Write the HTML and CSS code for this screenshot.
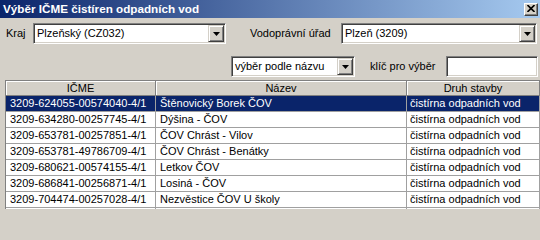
FILE: index.html
```html
<!DOCTYPE html>
<html lang="cs">
<head>
<meta charset="utf-8">
<title>Výběr IČME čistíren odpadních vod</title>
<link rel="stylesheet" href="styles.css">
</head>
<body>
<div class="window">
  <div class="titlebar">
    <span class="title">Výběr IČME čistíren odpadních vod</span>
    <span class="close"><svg width="8" height="7" viewBox="0 0 8 7"><path d="M0.5 0 L7.5 7 M7.5 0 L0.5 7" stroke="#000" stroke-width="1.6" fill="none"/></svg></span>
  </div>
  <div class="row1">
    <span class="lbl lbl-kraj">Kraj</span>
    <div class="combo combo-kraj">
      <span class="combo-text">Plzeňský (CZ032)</span>
      <span class="combo-btn"><svg width="7" height="4" viewBox="0 0 7 4"><polygon points="0,0 7,0 3.5,4" fill="#000"/></svg></span>
    </div>
    <span class="lbl lbl-urad">Vodoprávní úřad</span>
    <div class="combo combo-urad">
      <span class="combo-text">Plzeň (3209)</span>
      <span class="combo-btn"><svg width="7" height="4" viewBox="0 0 7 4"><polygon points="0,0 7,0 3.5,4" fill="#000"/></svg></span>
    </div>
  </div>
  <div class="row2">
    <div class="combo combo-mode">
      <span class="combo-text">výběr podle názvu</span>
      <span class="combo-btn"><svg width="7" height="4" viewBox="0 0 7 4"><polygon points="0,0 7,0 3.5,4" fill="#000"/></svg></span>
    </div>
    <span class="lbl lbl-key">klíč pro výběr</span>
    <div class="textbox"></div>
  </div>
  <div class="grid">
    <div class="grid-row head">
      <div class="cell">IČME</div>
      <div class="cell">Název</div>
      <div class="cell">Druh stavby</div>
    </div>
    <div class="grid-row selected">
      <div class="cell">3209-624055-00574040-4/1</div>
      <div class="cell">Štěnovický Borek ČOV</div>
      <div class="cell c3">čistírna odpadních vod</div>
    </div>
    <div class="grid-row">
      <div class="cell">3209-634280-00257745-4/1</div>
      <div class="cell">Dýšina - ČOV</div>
      <div class="cell c3">čistírna odpadních vod</div>
    </div>
    <div class="grid-row">
      <div class="cell">3209-653781-00257851-4/1</div>
      <div class="cell">ČOV Chrást - Vilov</div>
      <div class="cell c3">čistírna odpadních vod</div>
    </div>
    <div class="grid-row">
      <div class="cell">3209-653781-49786709-4/1</div>
      <div class="cell">ČOV Chrást - Benátky</div>
      <div class="cell c3">čistírna odpadních vod</div>
    </div>
    <div class="grid-row">
      <div class="cell">3209-680621-00574155-4/1</div>
      <div class="cell">Letkov ČOV</div>
      <div class="cell c3">čistírna odpadních vod</div>
    </div>
    <div class="grid-row">
      <div class="cell">3209-686841-00256871-4/1</div>
      <div class="cell">Losiná - ČOV</div>
      <div class="cell c3">čistírna odpadních vod</div>
    </div>
    <div class="grid-row">
      <div class="cell">3209-704474-00257028-4/1</div>
      <div class="cell">Nezvěstice ČOV U školy</div>
      <div class="cell c3">čistírna odpadních vod</div>
    </div>
    <div class="grid-row">
      <div class="cell"></div>
      <div class="cell"></div>
      <div class="cell c3"></div>
    </div>
  </div>
</div>
</body>
</html>
```

FILE: styles.css
```css
html, body {
  margin: 0;
  padding: 0;
  background: #d4d0c8;
}

.window {
  width: 540px;
  height: 209px;
  overflow: hidden;
  background: #d4d0c8;
  font-family: "Liberation Sans", Arial, sans-serif;
  font-size: 11px;
  color: #000;
}

.titlebar {
  height: 18px;
  display: flex;
  align-items: center;
  padding: 0 2px 0 3px;
  background: linear-gradient(to right, #0a246a, #a6caf0);
}

.title {
  color: #fff;
  font-weight: bold;
  font-size: 11.7px;
  line-height: 18px;
  white-space: nowrap;
}

.close {
  margin-left: auto;
  width: 14px;
  height: 13px;
  box-sizing: border-box;
  background: #d4d0c8;
  border: 1px solid;
  border-color: #fff #404040 #404040 #fff;
  box-shadow: inset -1px -1px #808080;
  display: flex;
  align-items: center;
  justify-content: center;
  padding-bottom: 1px;
}

.close svg {
  display: block;
}

.row1 {
  display: flex;
  align-items: center;
  height: 21px;
  margin-top: 5px;
  padding-left: 6px;
}

.row2 {
  display: flex;
  align-items: center;
  justify-content: flex-end;
  height: 21px;
  margin-top: 12px;
  padding-right: 2px;
}

.lbl {
  white-space: nowrap;
  line-height: 21px;
}

.lbl-kraj {
  width: 27px;
}

.lbl-urad {
  margin-left: 24px;
  width: 91px;
}

.lbl-key {
  margin-left: 15px;
  width: 76px;
}

.combo, .textbox {
  box-sizing: border-box;
  height: 21px;
  background: #fff;
  border: 1px solid;
  border-color: #808080 #fff #fff #808080;
  box-shadow: inset 1px 1px #404040, inset -1px -1px #d4d0c8;
  padding: 1px;
  display: flex;
  align-items: stretch;
}

.combo-kraj {
  width: 193px;
}

.combo-urad {
  width: 196px;
}

.combo-mode {
  width: 124px;
}

.textbox {
  width: 92px;
}

.combo-text {
  flex: 1;
  padding-left: 2px;
  line-height: 17px;
  white-space: nowrap;
  overflow: hidden;
}

.combo-btn {
  width: 16px;
  box-sizing: border-box;
  background: #d4d0c8;
  border: 1px solid;
  border-color: #d4d0c8 #404040 #404040 #d4d0c8;
  box-shadow: inset 1px 1px #fff, inset -1px -1px #808080;
  display: flex;
  align-items: center;
  justify-content: center;
}

.combo-btn svg {
  display: block;
}

.grid {
  margin-top: 3px;
  margin-left: 5px;
  border-top: 1px solid #808080;
  border-left: 1px solid #808080;
  background: #fff;
}

.grid-row {
  display: grid;
  grid-template-columns: 150px 251px 133px;
  height: 16px;
}

.cell {
  box-sizing: border-box;
  border-right: 1px solid #a0a0a0;
  border-bottom: 1px solid #a0a0a0;
  padding-left: 4px;
  line-height: 15px;
  white-space: nowrap;
  overflow: hidden;
}

.cell.c3 {
  padding-left: 3px;
}

.head {
  height: 15px;
  background: #d4d0c8;
}

.head .cell {
  padding-left: 0;
  text-align: center;
  line-height: 14px;
  border-right-color: #808080;
  border-bottom-color: #808080;
  box-shadow: inset 1px 1px #fff;
}

.selected {
  background: #0a246a;
  color: #fff;
}
```
